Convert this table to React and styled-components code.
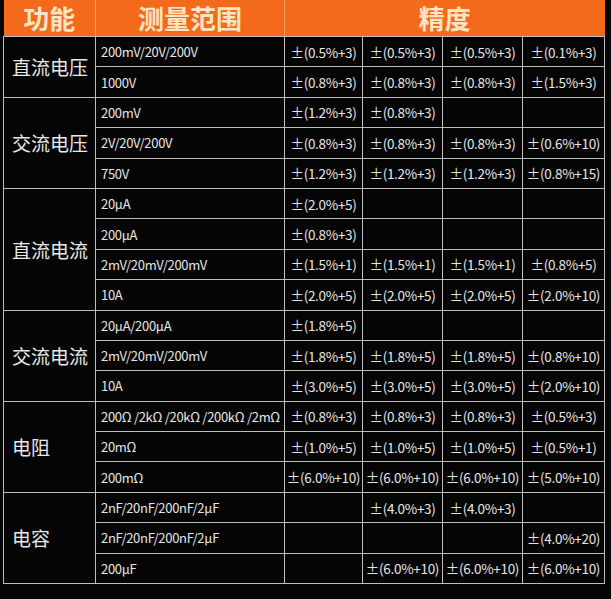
import React from "react";
import styled, { createGlobalStyle } from "styled-components";

const GlobalStyle = createGlobalStyle`
  html, body {
    margin: 0;
    padding: 0;
    background: #050505;
  }
  body {
    font-family: "Noto Sans CJK SC", "Noto Sans", sans-serif;
  }
`;

const Page = styled.div`
  width: 611px;
  height: 599px;
  background: #050505;
  padding: 0 0 0 3px;
  box-sizing: border-box;
  overflow: hidden;
`;

const Table = styled.table`
  border-collapse: collapse;
  table-layout: fixed;
  width: 601px;
`;

const Col = styled.col`
  width: ${(p) => p.$w}px;
`;

const HeadCell = styled.th`
  background: #f36a1d;
  color: #fbe4c2;
  font-size: 26px;
  font-weight: 700;
  height: 36px;
  padding: 0;
  text-align: center;
  line-height: 36px;
  border-left: 1.5px solid #f7a064;
  border-bottom: 1.5px solid #bdbdbd;
  &:first-child {
    border-left: none;
  }
`;

const Row = styled.tr`
  height: 30.4px;
`;

const FuncCell = styled.td`
  color: #e8e8e8;
  font-size: 19px;
  padding: 0 0 0 8px;
  border: 1.5px solid #bdbdbd;
  vertical-align: middle;
  white-space: nowrap;
`;

const RangeCell = styled.td`
  color: #e6e6e6;
  font-size: 13px;
  letter-spacing: -0.3px;
  padding: 0 0 0 5px;
  border: 1.5px solid #bdbdbd;
  white-space: nowrap;
  overflow: hidden;
`;

const AccCell = styled.td`
  color: #e6e6e6;
  font-size: 13.5px;
  letter-spacing: -0.3px;
  padding: 0;
  text-align: center;
  border: 1.5px solid #bdbdbd;
  white-space: nowrap;
`;

const colWidths = [92, 189, 78, 80, 80, 82];

const groups = [
  {
    name: "直流电压",
    rows: [
      ["200mV/20V/200V", "±(0.5%+3)", "±(0.5%+3)", "±(0.5%+3)", "±(0.1%+3)"],
      ["1000V", "±(0.8%+3)", "±(0.8%+3)", "±(0.8%+3)", "±(1.5%+3)"],
    ],
  },
  {
    name: "交流电压",
    rows: [
      ["200mV", "±(1.2%+3)", "±(0.8%+3)", "", ""],
      ["2V/20V/200V", "±(0.8%+3)", "±(0.8%+3)", "±(0.8%+3)", "±(0.6%+10)"],
      ["750V", "±(1.2%+3)", "±(1.2%+3)", "±(1.2%+3)", "±(0.8%+15)"],
    ],
  },
  {
    name: "直流电流",
    rows: [
      ["20μA", "±(2.0%+5)", "", "", ""],
      ["200μA", "±(0.8%+3)", "", "", ""],
      ["2mV/20mV/200mV", "±(1.5%+1)", "±(1.5%+1)", "±(1.5%+1)", "±(0.8%+5)"],
      ["10A", "±(2.0%+5)", "±(2.0%+5)", "±(2.0%+5)", "±(2.0%+10)"],
    ],
  },
  {
    name: "交流电流",
    rows: [
      ["20μA/200μA", "±(1.8%+5)", "", "", ""],
      ["2mV/20mV/200mV", "±(1.8%+5)", "±(1.8%+5)", "±(1.8%+5)", "±(0.8%+10)"],
      ["10A", "±(3.0%+5)", "±(3.0%+5)", "±(3.0%+5)", "±(2.0%+10)"],
    ],
  },
  {
    name: "电阻",
    rows: [
      ["200Ω /2kΩ /20kΩ /200kΩ /2mΩ", "±(0.8%+3)", "±(0.8%+3)", "±(0.8%+3)", "±(0.5%+3)"],
      ["20mΩ", "±(1.0%+5)", "±(1.0%+5)", "±(1.0%+5)", "±(0.5%+1)"],
      ["200mΩ", "±(6.0%+10)", "±(6.0%+10)", "±(6.0%+10)", "±(5.0%+10)"],
    ],
  },
  {
    name: "电容",
    rows: [
      ["2nF/20nF/200nF/2μF", "", "±(4.0%+3)", "±(4.0%+3)", ""],
      ["2nF/20nF/200nF/2μF", "", "", "", "±(4.0%+20)"],
      ["200μF", "", "±(6.0%+10)", "±(6.0%+10)", "±(6.0%+10)"],
    ],
  },
];

export default function App() {
  return (
    <Page>
      <GlobalStyle />
      <Table>
        <colgroup>
          {colWidths.map((w, i) => (
            <Col key={i} $w={w} />
          ))}
        </colgroup>
        <thead>
          <tr>
            <HeadCell>功能</HeadCell>
            <HeadCell>测量范围</HeadCell>
            <HeadCell colSpan={4}>精度</HeadCell>
          </tr>
        </thead>
        <tbody>
          {groups.map((g) =>
            g.rows.map((r, i) => (
              <Row key={g.name + i}>
                {i === 0 && <FuncCell rowSpan={g.rows.length}>{g.name}</FuncCell>}
                <RangeCell>{r[0]}</RangeCell>
                {r.slice(1).map((v, j) => (
                  <AccCell key={j}>{v}</AccCell>
                ))}
              </Row>
            ))
          )}
        </tbody>
      </Table>
    </Page>
  );
}
